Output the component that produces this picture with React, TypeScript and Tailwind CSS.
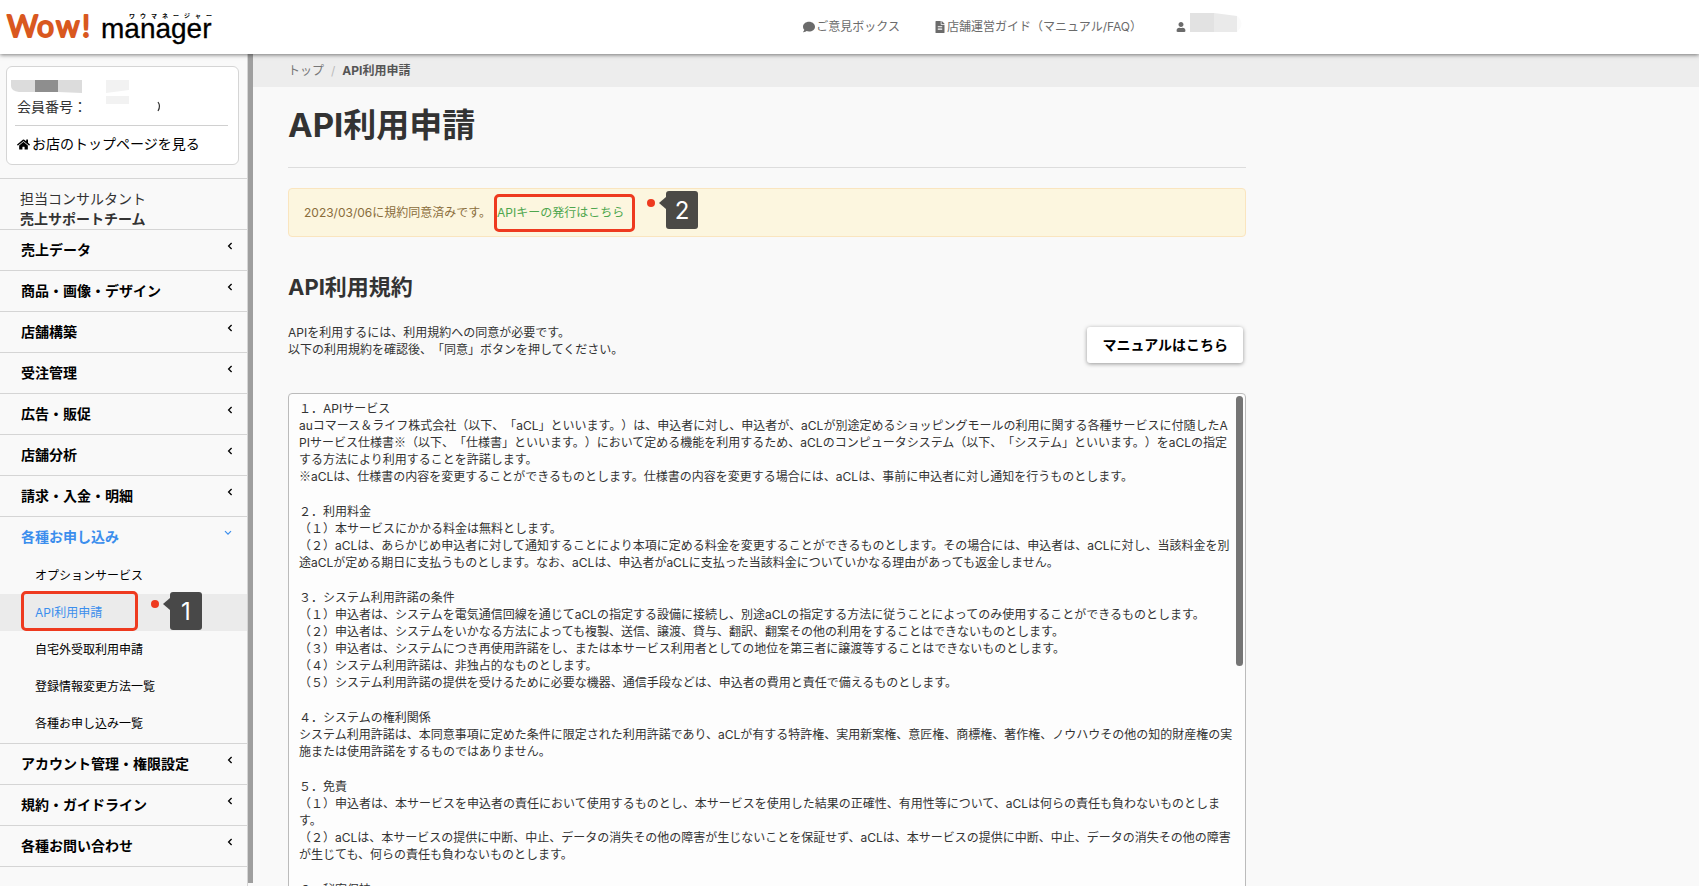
import { Fragment, type ReactNode } from "react";
import { FaComment, FaFileAlt, FaHome, FaUser } from "react-icons/fa";

const menuTop = [
  "売上データ",
  "商品・画像・デザイン",
  "店舗構築",
  "受注管理",
  "広告・販促",
  "店舗分析",
  "請求・入金・明細",
];

const subMenu = [
  "オプションサービス",
  "API利用申請",
  "自宅外受取利用申請",
  "登録情報変更方法一覧",
  "各種お申し込み一覧",
];

const menuBottom = ["アカウント管理・権限設定", "規約・ガイドライン", "各種お問い合わせ"];

const terms: { title: string; body: string[] }[] = [
  {
    title: "１．APIサービス",
    body: [
      "auコマース＆ライフ株式会社（以下、「aCL」といいます。）は、申込者に対し、申込者が、aCLが別途定めるショッピングモールの利用に関する各種サービスに付随したAPIサービス仕様書※（以下、「仕様書」といいます。）において定める機能を利用するため、aCLのコンピュータシステム（以下、「システム」といいます。）をaCLの指定する方法により利用することを許諾します。",
      "※aCLは、仕様書の内容を変更することができるものとします。仕様書の内容を変更する場合には、aCLは、事前に申込者に対し通知を行うものとします。",
    ],
  },
  {
    title: "２．利用料金",
    body: [
      "（１）本サービスにかかる料金は無料とします。",
      "（２）aCLは、あらかじめ申込者に対して通知することにより本項に定める料金を変更することができるものとします。その場合には、申込者は、aCLに対し、当該料金を別途aCLが定める期日に支払うものとします。なお、aCLは、申込者がaCLに支払った当該料金についていかなる理由があっても返金しません。",
    ],
  },
  {
    title: "３．システム利用許諾の条件",
    body: [
      "（１）申込者は、システムを電気通信回線を通じてaCLの指定する設備に接続し、別途aCLの指定する方法に従うことによってのみ使用することができるものとします。",
      "（２）申込者は、システムをいかなる方法によっても複製、送信、譲渡、貸与、翻訳、翻案その他の利用をすることはできないものとします。",
      "（３）申込者は、システムにつき再使用許諾をし、または本サービス利用者としての地位を第三者に譲渡等することはできないものとします。",
      "（４）システム利用許諾は、非独占的なものとします。",
      "（５）システム利用許諾の提供を受けるために必要な機器、通信手段などは、申込者の費用と責任で備えるものとします。",
    ],
  },
  {
    title: "４．システムの権利関係",
    body: [
      "システム利用許諾は、本同意事項に定めた条件に限定された利用許諾であり、aCLが有する特許権、実用新案権、意匠権、商標権、著作権、ノウハウその他の知的財産権の実施または使用許諾をするものではありません。",
    ],
  },
  {
    title: "５．免責",
    body: [
      "（１）申込者は、本サービスを申込者の責任において使用するものとし、本サービスを使用した結果の正確性、有用性等について、aCLは何らの責任も負わないものとします。",
      "（２）aCLは、本サービスの提供に中断、中止、データの消失その他の障害が生じないことを保証せず、aCLは、本サービスの提供に中断、中止、データの消失その他の障害が生じても、何らの責任も負わないものとします。",
    ],
  },
  { title: "６．秘密保持", body: [] },
];

function Logo() {
  return (
    <svg width="216" height="54" viewBox="0 0 216 54" role="img" aria-label="Wow! manager ワウマネージャー">
      <text
        y="37"
        fontSize="30"
        fill="#d9581f"
        stroke="#d9581f"
        strokeWidth="2"
        strokeLinejoin="round"
        className="font-['Lato'] font-normal"
      >
        <tspan x="7">W</tspan>
        <tspan x="37">o</tspan>
        <tspan x="56">w</tspan>
        <tspan x="82">!</tspan>
      </text>
      <text x="101" y="38" fontSize="28" fill="#000" stroke="#000" strokeWidth="0.3" className="font-['Liberation_Sans']">
        manager
      </text>
      <text
        x="129 140 151 162 173 184 195 206"
        y="18"
        fontSize="6"
        fill="#000"
        className="font-['Noto_Sans_CJK_JP'] font-bold"
      >
        ワウマネージャー
      </text>
    </svg>
  );
}

function Angle({ open = false }: { open?: boolean }) {
  return open ? (
    <svg width="8" height="6" viewBox="0 0 8 6" fill="none" stroke="currentColor" strokeWidth="1.2" className="mb-2">
      <path d="M1 1.2 4 4.2 7 1.2" />
    </svg>
  ) : (
    <svg width="6" height="8" viewBox="0 0 6 8" fill="none" stroke="currentColor" strokeWidth="1.3" className="mb-2">
      <path d="M4.6 1 1.6 4 4.6 7" />
    </svg>
  );
}

function MenuButton({ label, open = false }: { label: string; open?: boolean }) {
  return (
    <button
      type="button"
      aria-expanded={open}
      className={
        open
          ? "flex h-10 w-full items-center justify-between pr-[15px] pl-[21px] text-left text-sm font-bold text-[#3b8eed]"
          : "flex h-10 w-full items-center justify-between pr-[14px] pl-[21px] text-left text-sm font-bold text-black"
      }
    >
      {label}
      <Angle open={open} />
    </button>
  );
}

function Callout({ children }: { children: ReactNode }) {
  return (
    <span className="flex items-start">
      <span className="mt-2 size-2 rounded-full bg-[#ee3a1f]" />
      <svg width="7" height="12" viewBox="0 0 7 12" className="mt-[6px] ml-1">
        <path d="M0 6 7 0V12Z" fill="#282828" fillOpacity="0.84" />
      </svg>
      <span className="flex h-[38px] w-8 items-center justify-center rounded-[3px] bg-[#282828]/84 pt-[2px] font-['Inter'] text-2xl text-white">
        {children}
      </span>
    </span>
  );
}

/* The reference mark is set in the Japanese face so that it keeps its full width. */
function Paragraph({ text }: { text: string }) {
  return (
    <p className="break-all">
      {text.split("※").map((part, i) => (
        <Fragment key={i}>
          {i > 0 && <span className="font-['Noto_Sans_CJK_JP',sans-serif] leading-none">※</span>}
          {part}
        </Fragment>
      ))}
    </p>
  );
}

function Sidebar() {
  return (
    <div className="flex w-[253px] shrink-0">
      <aside className="flex-1 overflow-hidden border-r border-[#d5d5d5]">
        <div className="mt-3 mr-2 ml-[6px] h-[99px] rounded-md border border-[#d5d5d5] bg-white pr-[10px] pl-2">
          <div className="relative h-[59px] border-b border-[#d0d0d0]">
            <svg width="180" height="50" viewBox="0 0 180 50" className="absolute top-0 -left-1" aria-hidden="true">
              <path d="M0 13H24V25H8Q0 24 0 19Z" fill="#dcdcdc" />
              <path d="M24 13H47V25H24Z" fill="#8e8e8e" />
              <path d="M47 13H71V26L47 25Z" fill="#dcdcdc" />
              <path d="M95 13H118V23L95 26Z" fill="#f2f2f2" />
              <path d="M95 29H118V37H95Z" fill="#f2f2f2" />
              <path d="M147 35Q150 39 147 44" fill="none" stroke="#333" strokeWidth="1.2" />
            </svg>
            <p className="pt-[30px] pl-[2px] text-sm leading-5 text-[#333]">会員番号：</p>
          </div>
          <a href="#shop" className="flex items-center gap-[2px] pt-2 pl-[2px] text-sm leading-5 text-black">
            <FaHome className="size-[13px]" />
            お店のトップページを見る
          </a>
        </div>
        <div className="mt-[13px] border-t border-[#d5d5d5] pt-[10px] pl-5 text-sm leading-5 text-[#333]">
          <p>担当コンサルタント</p>
          <p className="font-bold">売上サポートチーム</p>
        </div>
        <nav>
          <ul className="divide-y divide-[#d5d5d5] border-y border-[#d5d5d5]">
            {menuTop.map((label) => (
              <li key={label}>
                <MenuButton label={label} />
              </li>
            ))}
            <li className="pb-px">
              <MenuButton label="各種お申し込み" open />
              <ul>
                {subMenu.map((label) =>
                  label === "API利用申請" ? (
                    <li key={label} className="relative bg-[#ebebeb]">
                      <a href="#api" aria-current="page" className="flex h-[37px] items-center pl-[35px] text-xs text-[#3b8eed]">
                        {label}
                      </a>
                      <span className="pointer-events-none absolute -top-[3px] left-[21px] h-10 w-[117px] rounded-[5px] border-3 border-[#ee3a1f]" />
                      <span className="pointer-events-none absolute -top-[2px] left-[151px]">
                        <Callout>1</Callout>
                      </span>
                    </li>
                  ) : (
                    <li key={label}>
                      <a href="#menu" className="flex h-[37px] items-center pl-[35px] text-xs text-black">
                        {label}
                      </a>
                    </li>
                  ),
                )}
              </ul>
            </li>
            {menuBottom.map((label) => (
              <li key={label}>
                <MenuButton label={label} />
              </li>
            ))}
          </ul>
        </nav>
      </aside>
      <div className="mb-[3px] w-[5px] bg-[#9f9f9f]" />
    </div>
  );
}

export default function App() {
  return (
    <div className="flex h-screen flex-col overflow-hidden bg-[#f9f9f9] font-['Inter','Noto_Sans_CJK_JP',sans-serif] text-[#333] [text-spacing-trim:space-all]">
      <header className="relative z-10 h-[54px] shrink-0 bg-white shadow-[0_1px_4px_rgba(0,0,0,0.5)]">
        <div className="flex h-full max-w-[1246px] items-center justify-between">
          <a href="#home">
            <Logo />
          </a>
          <nav className="flex items-center gap-[34px] text-xs text-[#6b6b6b]">
            <a href="#opinion" className="flex items-center gap-px">
              <FaComment className="size-3" />
              ご意見ボックス
            </a>
            <a href="#guide" className="flex items-center gap-px">
              <FaFileAlt className="size-3" />
              店舗運営ガイド（マニュアル/FAQ）
            </a>
            <a href="#account" aria-label="アカウント" className="flex items-center gap-1">
              <FaUser className="size-[10px]" />
              <svg width="56" height="20" viewBox="0 0 56 20" className="mb-2" aria-hidden="true">
                <path d="M0 0H24V19H0Z" fill="#e2e2e2" />
                <path d="M24 0 47 3V19H24Z" fill="#eaeaea" />
                <path d="M47 3Q56 10 47 19Z" fill="#fbfbfb" />
              </svg>
            </a>
          </nav>
        </div>
      </header>

      <div className="flex min-h-0 flex-1">
        <Sidebar />
        <main className="min-w-0 flex-1 overflow-hidden">
          <ol className="flex h-[33px] items-center bg-[#ededed] pl-[35px] text-xs">
            <li className="text-[#777]">
              <a href="#top">トップ</a>
            </li>
            <li className="px-[7px] text-[#bbb]">/</li>
            <li className="font-bold text-[#555]">API利用申請</li>
          </ol>

          <div className="mr-6 ml-[35px] max-w-[958px]">
            <h1 className="border-b border-[#ddd] pt-[18px] pb-[22px] text-[33px] leading-10 font-bold">API利用申請</h1>

            <div className="mt-5 flex h-[49px] items-center gap-[6px] rounded border border-[#fae5bf] bg-[#fcf6df] pl-[15px] text-xs text-[#8a6d3b]">
              2023/03/06に規約同意済みです。
              <span className="relative">
                <a href="#key" className="text-[#4ea64e]">
                  APIキーの発行はこちら
                </a>
                <span className="pointer-events-none absolute -top-[11px] -left-[3px] h-[38px] w-[141px] rounded-[5px] border-3 border-[#ee3a1f]" />
                <span className="pointer-events-none absolute -top-[14px] left-[150px]">
                  <Callout>2</Callout>
                </span>
              </span>
            </div>

            <h2 className="mt-9 text-[22px] leading-7 font-bold">API利用規約</h2>

            <div className="mt-[23px] flex items-start justify-between pr-[3px]">
              <p className="text-xs leading-[17px]">
                APIを利用するには、利用規約への同意が必要です。
                <br />
                以下の利用規約を確認後、「同意」ボタンを押してください。
              </p>
              <a
                href="#manual"
                className="mt-[3px] flex h-9 items-center rounded-[3px] bg-white px-[15px] text-sm font-bold text-black shadow-[0_1px_4px_rgba(0,0,0,0.4)]"
              >
                マニュアルはこちら
              </a>
            </div>

            <div className="relative mt-[30px] rounded border border-[#bbb] bg-[#fdfdfd]">
              <div className="flex h-[610px] flex-col gap-[18px] overflow-hidden pt-[6px] pr-[11px] pl-[10px] text-xs leading-[17px]">
                {terms.map((section) => (
                  <section key={section.title}>
                    <h3>{section.title}</h3>
                    {section.body.map((text) => (
                      <Paragraph key={text} text={text} />
                    ))}
                  </section>
                ))}
              </div>
              <div className="absolute top-[2px] right-[2px] h-[270px] w-[7px] rounded-full bg-[#757575]" />
            </div>
          </div>
        </main>
      </div>
    </div>
  );
}
